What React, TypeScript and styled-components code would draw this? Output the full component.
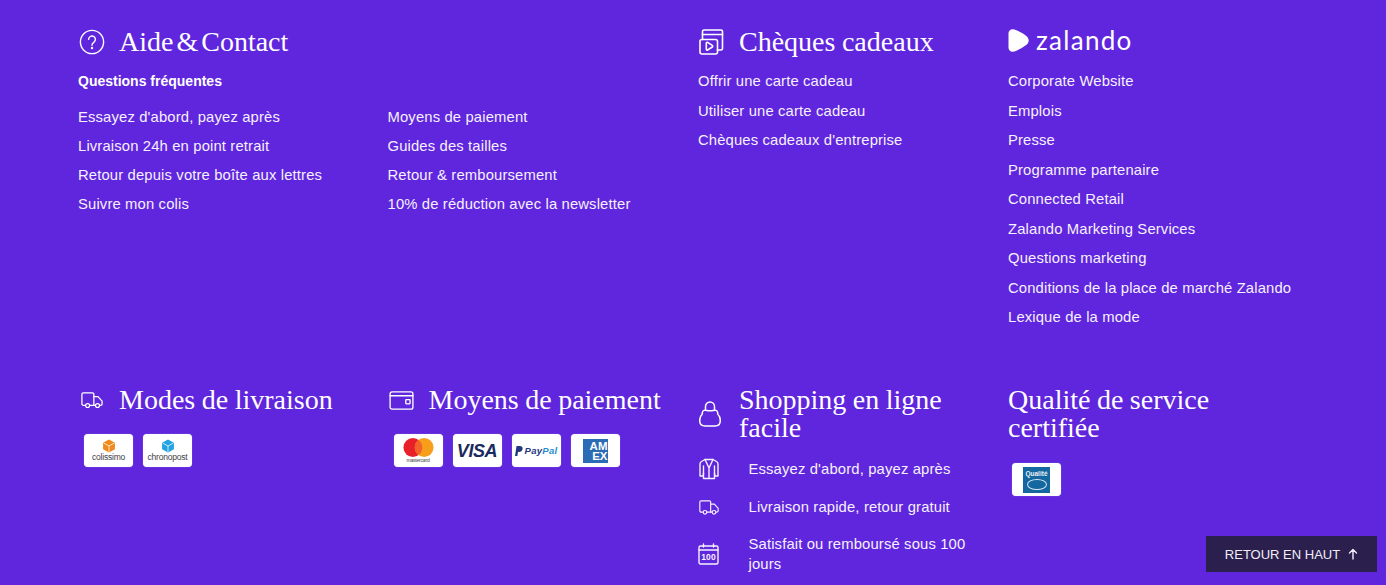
import React from 'react'
import styled, { createGlobalStyle } from 'styled-components'

const GlobalStyle = createGlobalStyle`
  html, body {
    margin: 0;
    padding: 0;
    height: 100%;
    overflow: hidden;
    background: #6026dd;
  }
`

const Page = styled.footer`
  height: 585px;
  box-sizing: border-box;
  padding: 0 0 0 78px;
  background: #6026dd;
  color: #fff;
  font-family: 'Liberation Sans', Arial, sans-serif;
  overflow: hidden;
`

const Grid = styled.div`
  display: grid;
  grid-template-columns: 309.5px 310.5px 310px 300px;
`

const TopRow = styled(Grid)`
  height: 386px;
  padding-top: 28px;
  box-sizing: border-box;
`

const Section = styled.section<{ $span?: number }>`
  grid-column: span ${({ $span }) => $span ?? 1};
  min-width: 0;
`

const Heading = styled.div`
  display: flex;
  align-items: center;
  gap: 14px;
  min-height: 28px;
  padding-right: 24px;
`

const IconSlot = styled.span`
  display: flex;
  flex: none;
  width: 27px;
  height: 27px;
  align-items: center;
  justify-content: center;
  color: #fff;
`

const Title = styled.h2<{ $tight?: boolean }>`
  margin: 0;
  font-family: 'Liberation Serif', 'Times New Roman', serif;
  font-size: 28px;
  line-height: 28px;
  font-weight: 400;
  word-spacing: ${({ $tight }) => ($tight ? '-4px' : '-0.5px')};
`

const SubTitle = styled.div`
  margin-top: 16px;
  font-size: 14px;
  line-height: 18px;
  font-weight: 700;
`

const LinkColumns = styled.div`
  display: grid;
  grid-template-columns: 309.5px 310.5px;
  margin-top: 13px;
`

const LinkList = styled.ul<{ $top?: number }>`
  list-style: none;
  margin: ${({ $top }) => $top ?? 0}px 0 0;
  padding: 0;
`

const LinkItem = styled.li<{ $pitch?: number }>`
  font-size: 14.8px;
  letter-spacing: 0.15px;
  line-height: ${({ $pitch }) => $pitch ?? 29}px;
  color: #f6f1fe;
  white-space: nowrap;
`

const Logo = styled.div`
  display: flex;
  align-items: center;
  gap: 7px;
  height: 24px;
  font-family: Lato, 'Open Sans', sans-serif;
  font-size: 26px;
  font-weight: 400;
  letter-spacing: 1.3px;
`

const BadgeRow = styled.div<{ $top: number; $left: number }>`
  display: flex;
  gap: 10px;
  margin: ${({ $top }) => $top}px 0 0 ${({ $left }) => $left}px;
`

const Badge = styled.div`
  display: flex;
  flex-direction: column;
  align-items: center;
  justify-content: center;
  width: 49px;
  height: 33px;
  box-sizing: border-box;
  background: #fff;
  border-radius: 4px;
  box-shadow: 0 0 1px rgba(255, 255, 255, 0.6);
  color: #333;
  overflow: hidden;
`

const BadgeCaption = styled.span<{ $small?: boolean }>`
  font-size: ${({ $small }) => ($small ? 5 : 8.5)}px;
  line-height: ${({ $small }) => ($small ? 6 : 9)}px;
  letter-spacing: -0.2px;
  color: #3d3d45;
  white-space: nowrap;
`

const VisaMark = styled.span`
  font-size: 18px;
  line-height: 1;
  font-weight: 700;
  font-style: italic;
  letter-spacing: -0.4px;
  color: #1a2a5e;
`

const PayPalMark = styled.span`
  display: flex;
  align-items: center;
  gap: 2px;
  font-size: 9.5px;
  font-weight: 700;
  font-style: italic;
  letter-spacing: 0.3px;
  color: #23397f;
`

const PayPalEnd = styled.span`
  color: #2a8ccb;
`

const AmexMark = styled.span`
  display: flex;
  flex-direction: column;
  width: 25px;
  height: 24px;
  align-items: flex-end;
  justify-content: center;
  background: #2b6cb5;
  color: #fff;
  font-size: 11.5px;
  line-height: 10px;
  font-weight: 700;
`

const QualityMark = styled.span`
  display: flex;
  flex-direction: column;
  align-items: center;
  width: 27px;
  height: 26px;
  padding-top: 4px;
  box-sizing: border-box;
  background: #15679f;
  color: #e8f2f8;
  font-size: 6.5px;
  line-height: 6.5px;
  font-weight: 700;
`

const QualityOval = styled.span`
  width: 18px;
  height: 9px;
  margin-top: 2px;
  border: 1px solid #d8e8f2;
  border-radius: 50%;
`

const Perks = styled.ul`
  list-style: none;
  margin: 8px 0 0;
  padding: 0;
`

const Perk = styled.li`
  display: flex;
  align-items: center;
  gap: 29.5px;
  min-height: 38px;
  font-size: 14.8px;
  letter-spacing: 0.15px;
  line-height: 20px;
  color: #f6f1fe;

  &:last-child {
    margin-top: 8px;
  }
`

const PerkIcon = styled.span`
  display: flex;
  flex: none;
  width: 21px;
  justify-content: center;
`

const PerkText = styled.span`
  width: 225px;
`

const BackToTop = styled.button`
  position: fixed;
  right: 9px;
  bottom: 13px;
  display: flex;
  align-items: center;
  justify-content: center;
  gap: 8px;
  width: 171px;
  height: 36px;
  padding: 0;
  border: 0;
  background: #2b1f4d;
  color: #f1eef6;
  font-family: 'Liberation Sans', Arial, sans-serif;
  font-size: 13px;
`

const stroke = {
  fill: 'none',
  stroke: 'currentColor',
  strokeWidth: 1.4,
  strokeLinecap: 'round' as const,
  strokeLinejoin: 'round' as const,
}

const HelpIcon = () => (
  <svg width="26" height="26" viewBox="0 0 26 26" {...stroke}>
    <circle cx="13" cy="13" r="11.6" />
    <path d="M9.6 10.4a3.4 3.4 0 1 1 5.2 2.9c-1.1.7-1.8 1.4-1.8 2.9" />
    <circle cx="13" cy="19" r=".5" />
  </svg>
)

const GiftIcon = () => (
  <svg width="25" height="26" viewBox="0 0 25 26" {...stroke} strokeWidth={1.6}>
    <path d="M3.5 10.5V2.5A1.5 1.5 0 0 1 5 1h17a1.5 1.5 0 0 1 1.5 1.5V19.5a1.5 1.5 0 0 1-1.5 1.5h-3.5" />
    <path d="M3.5 5.5h20" />
    <rect x="1" y="10.5" width="17.5" height="14.5" rx="2" />
    <path d="M7.3 14.2c0-.7.7-1.1 1.3-.8l4.700 3c.6.4.6 1.2 0 1.6l-4.700 3c-.6.3-1.3-.1-1.3-.8z" />
  </svg>
)

const TruckIcon = ({ size = 22 }: { size?: number }) => (
  <svg width={size} height={size * 0.75} viewBox="0 0 24 18" {...stroke}>
    <path d="M5 14.5H2.5A1.5 1.5 0 0 1 1 13V2.5A1.5 1.5 0 0 1 2.5 1h10A1.5 1.5 0 0 1 14 2.5v12H9.5" />
    <path d="M14 5h4.5l4.5 5v3a1.5 1.5 0 0 1-1.5 1.5h-1M15.5 14.5H14" />
    <circle cx="7.2" cy="14.8" r="2.2" />
    <circle cx="18" cy="14.8" r="2.2" />
  </svg>
)

const WalletIcon = () => (
  <svg width="25" height="19" viewBox="0 0 26 20" {...stroke}>
    <rect x="1" y="1" width="24" height="18" rx="2" />
    <path d="M1 5h24" />
    <rect x="17.5" y="9" width="4.5" height="4.5" rx=".5" />
  </svg>
)

const BagIcon = () => (
  <svg width="25" height="26" viewBox="0 0 25 26" {...stroke} strokeWidth={1.5}>
    <path d="M6.5 9V5.5a4.500 4.500 0 0 1 9 0V9" />
    <path d="M4.500 9.500C6 8.500 8 9.800 11 9.800S16 8.500 17.500 9.500C19 10.500 18.500 12.500 19 13.500 20.500 14.800 21.300 17 21.300 19.500 21.300 23 19 25 16 25H6C3 25 .7 23 .7 19.500.7 17 1.500 14.800 3 13.500 3.500 12.500 3 10.500 4.500 9.500z" />
  </svg>
)

const CardiganIcon = () => (
  <svg width="20" height="22" viewBox="0 0 20 22" {...stroke}>
    <path d="M6 1.5h8l3.5 2c1 .6 1.5 1.5 1.5 2.6V18h-3.300l-.2-3M6 1.5l-3.500 2C1.500 4.100 1 5 1 6.100V18h3.300l.2-3" />
    <path d="M6 1.500 10 10l4-8.500M4.500 8v12.500h11V8M10 10v10.500" />
  </svg>
)

const CalendarIcon = () => (
  <svg width="21" height="22" viewBox="0 0 21 22" {...stroke}>
    <rect x="1" y="3" width="19" height="18" rx="1.5" />
    <path d="M1 7h19M5.5 1v3M15.5 1v3" />
    <text
      x="10.5"
      y="17"
      textAnchor="middle"
      fontSize="8.5"
      fontWeight="700"
      fontFamily="'Liberation Sans', Arial, sans-serif"
      fill="currentColor"
      stroke="none"
    >
      100
    </text>
  </svg>
)

const ArrowUp = () => (
  <svg width="10" height="12" viewBox="0 0 10 12" {...stroke}>
    <path d="M5 11V1.5M1.5 5 5 1.5 8.500 5" />
  </svg>
)

const ZalandoMark = () => (
  <svg width="21" height="23" viewBox="0 0 21 23">
    <path
      fill="currentColor"
      d="M.5 4.500C.5 2 2.300.3 4.500.3c1.200 0 2.700.4 4.500 1.200 4.500 2 9.500 5 11 7.400.9 1.500.9 3.700 0 5.200-1.500 2.400-6.500 5.400-11 7.400-1.800.8-3.300 1.200-4.500 1.200-2.200 0-4-1.700-4-4.200z"
    />
  </svg>
)

const ParcelIcon = ({ color }: { color: string }) => (
  <svg width="14" height="14" viewBox="0 0 13 13">
    <path fill={color} d="M6.500.5 12 3.500v6L6.500 12.500 1 9.500v-6z" />
    <path fill="none" stroke="#fff" strokeWidth=".7" d="M1.500 3.700 6.500 6.500 11.500 3.700M6.500 6.500V12" />
  </svg>
)

const MastercardIcon = () => (
  <svg width="31" height="19" viewBox="0 0 33 20">
    <circle cx="10.5" cy="10" r="10" fill="#e8202a" />
    <circle cx="22.5" cy="10" r="10" fill="#f79e1b" />
    <path fill="#f2622b" d="M16.500 2a10 10 0 0 1 0 16 10 10 0 0 1 0-16z" />
  </svg>
)

const PayPalGlyph = () => (
  <svg width="8" height="10" viewBox="0 0 8 10">
    <path fill="#23397f" d="M1.500 0h3.200C6.700 0 8 1 7.600 3 7.200 5 5.800 6 4 6H3l-.6 4H0z" />
  </svg>
)

const leftLinks = ["Essayez d'abord, payez après", 'Livraison 24h en point retrait', 'Retour depuis votre boîte aux lettres', 'Suivre mon colis']
const rightLinks = ['Moyens de paiement', 'Guides des tailles', 'Retour & remboursement', '10% de réduction avec la newsletter']
const giftLinks = ['Offrir une carte cadeau', 'Utiliser une carte cadeau', "Chèques cadeaux d'entreprise"]
const corporateLinks = [
  'Corporate Website',
  'Emplois',
  'Presse',
  'Programme partenaire',
  'Connected Retail',
  'Zalando Marketing Services',
  'Questions marketing',
  'Conditions de la place de marché Zalando',
  'Lexique de la mode',
]

export default function App() {
  return (
    <Page>
      <GlobalStyle />
      <TopRow>
        <Section $span={2}>
          <Heading>
            <IconSlot><HelpIcon /></IconSlot>
            <Title $tight>Aide &amp; Contact</Title>
          </Heading>
          <SubTitle>Questions fréquentes</SubTitle>
          <LinkColumns>
            <LinkList>
              {leftLinks.map((l) => <LinkItem key={l}>{l}</LinkItem>)}
            </LinkList>
            <LinkList>
              {rightLinks.map((l) => <LinkItem key={l}>{l}</LinkItem>)}
            </LinkList>
          </LinkColumns>
        </Section>
        <Section>
          <Heading>
            <IconSlot><GiftIcon /></IconSlot>
            <Title>Chèques cadeaux</Title>
          </Heading>
          <LinkList $top={11}>
            {giftLinks.map((l) => <LinkItem key={l} $pitch={29.5}>{l}</LinkItem>)}
          </LinkList>
        </Section>
        <Section>
          <Logo>
            <ZalandoMark />
            <span>zalando</span>
          </Logo>
          <LinkList $top={15}>
            {corporateLinks.map((l) => <LinkItem key={l} $pitch={29.5}>{l}</LinkItem>)}
          </LinkList>
        </Section>
      </TopRow>
      <Grid>
        <Section>
          <Heading>
            <IconSlot><TruckIcon /></IconSlot>
            <Title>Modes de livraison</Title>
          </Heading>
          <BadgeRow $top={20} $left={6}>
            <Badge>
              <ParcelIcon color="#f08a1d" />
              <BadgeCaption>colissimo</BadgeCaption>
            </Badge>
            <Badge>
              <ParcelIcon color="#23a3e0" />
              <BadgeCaption>chronopost</BadgeCaption>
            </Badge>
          </BadgeRow>
        </Section>
        <Section>
          <Heading>
            <IconSlot><WalletIcon /></IconSlot>
            <Title>Moyens de paiement</Title>
          </Heading>
          <BadgeRow $top={20} $left={6}>
            <Badge>
              <MastercardIcon />
              <BadgeCaption $small>mastercard</BadgeCaption>
            </Badge>
            <Badge><VisaMark>VISA</VisaMark></Badge>
            <Badge>
              <PayPalMark>
                <PayPalGlyph />
                <span>Pay<PayPalEnd>Pal</PayPalEnd></span>
              </PayPalMark>
            </Badge>
            <Badge>
              <AmexMark>
                <span>AM</span>
                <span>EX</span>
              </AmexMark>
            </Badge>
          </BadgeRow>
        </Section>
        <Section>
          <Heading>
            <IconSlot><BagIcon /></IconSlot>
            <Title>Shopping en ligne facile</Title>
          </Heading>
          <Perks>
            <Perk>
              <PerkIcon><CardiganIcon /></PerkIcon>
              <PerkText>Essayez d'abord, payez après</PerkText>
            </Perk>
            <Perk>
              <PerkIcon><TruckIcon size={20} /></PerkIcon>
              <PerkText>Livraison rapide, retour gratuit</PerkText>
            </Perk>
            <Perk>
              <PerkIcon><CalendarIcon /></PerkIcon>
              <PerkText>Satisfait ou remboursé sous 100 jours</PerkText>
            </Perk>
          </Perks>
        </Section>
        <Section>
          <Heading>
            <Title>Qualité de service certifiée</Title>
          </Heading>
          <BadgeRow $top={21} $left={4}>
            <Badge>
              <QualityMark>
                <span>Qualité</span>
                <QualityOval />
              </QualityMark>
            </Badge>
          </BadgeRow>
        </Section>
      </Grid>
      <BackToTop>
        RETOUR EN HAUT
        <ArrowUp />
      </BackToTop>
    </Page>
  )
}
